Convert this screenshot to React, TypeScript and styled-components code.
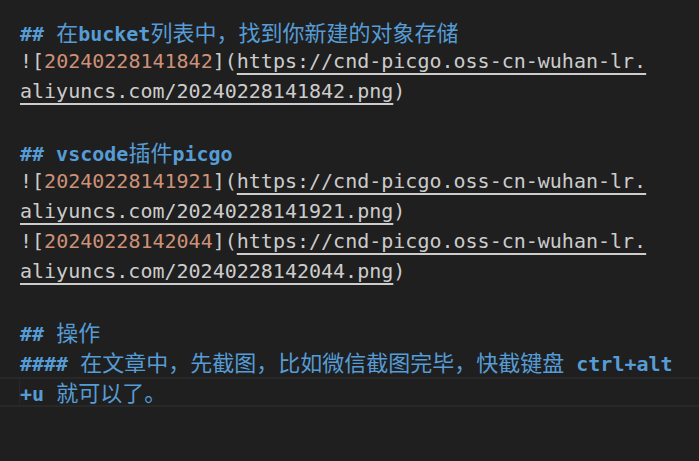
import React from "react";
import styled, { createGlobalStyle, css } from "styled-components";

const Global = createGlobalStyle`
  html, body {
    margin: 0;
    padding: 0;
    background: #1f1f1f;
  }
  #root {
    min-height: 100vh;
    background: #1f1f1f;
  }
`;

const Editor = styled.div`
  display: flex;
  flex-direction: column;
  padding-top: 17px;
  width: 699px;
  height: 461px;
  box-sizing: border-box;
  overflow: hidden;
  background: #1f1f1f;
  font-family: "DejaVu Sans Mono", "Liberation Mono", monospace;
  font-size: 20px;
  color: #cccccc;
`;

const Line = styled.div`
  display: flex;
  height: 30px;
`;

const Gutter = styled.div<{ $current?: boolean }>`
  width: 19px;
  flex: none;
  box-sizing: border-box;
  border-top: 2px solid transparent;
  border-bottom: 2px solid transparent;
  ${(p) =>
    p.$current &&
    css`
      border-color: #282828;
    `}
`;

const Code = styled.div<{ $current?: boolean }>`
  flex: 1;
  box-sizing: border-box;
  white-space: pre;
  line-height: 24px;
  padding-bottom: 2px;
  border: 2px solid transparent;
  border-right: none;
  border-left-width: 1px;
  ${(p) =>
    p.$current &&
    css`
      border-color: #282828;
    `}
`;

const Heading = styled.span`
  color: #569cd6;
  font-weight: 700;
`;

const Han = styled.span`
  font-family: "Noto Sans CJK SC", sans-serif;
  font-size: 22px;
  font-weight: 400;
`;

const AltText = styled.span`
  color: #ce9178;
`;

const Link = styled.span`
  text-decoration: underline;
  text-decoration-thickness: 2px;
  text-underline-offset: 5px;
  text-decoration-color: #cccccc;
`;

type Seg =
  | { k: "h"; t: string }
  | { k: "hh"; t: string }
  | { k: "p"; t: string }
  | { k: "alt"; t: string }
  | { k: "link"; t: string };

const img = (id: string): Seg[][] => [
  [
    { k: "p", t: "![" },
    { k: "alt", t: id },
    { k: "p", t: "](" },
    { k: "link", t: "https://cnd-picgo.oss-cn-wuhan-lr." },
  ],
  [
    { k: "link", t: `aliyuncs.com/${id}.png` },
    { k: "p", t: ")" },
  ],
];

const lines: Seg[][] = [
  [
    { k: "h", t: "## " },
    { k: "hh", t: "在" },
    { k: "h", t: "bucket" },
    { k: "hh", t: "列表中，找到你新建的对象存储" },
  ],
  ...img("20240228141842"),
  [],
  [
    { k: "h", t: "## vscode" },
    { k: "hh", t: "插件" },
    { k: "h", t: "picgo" },
  ],
  ...img("20240228141921"),
  ...img("20240228142044"),
  [],
  [
    { k: "h", t: "## " },
    { k: "hh", t: "操作" },
  ],
  [
    { k: "h", t: "#### " },
    { k: "hh", t: "在文章中，先截图，比如微信截图完毕，快截键盘" },
    { k: "h", t: " ctrl+alt" },
  ],
  [
    { k: "h", t: "+u " },
    { k: "hh", t: "就可以了。" },
  ],
];

const renderSeg = (s: Seg, i: number) => {
  switch (s.k) {
    case "h":
      return <Heading key={i}>{s.t}</Heading>;
    case "hh":
      return (
        <Heading key={i}>
          <Han>{s.t}</Han>
        </Heading>
      );
    case "alt":
      return <AltText key={i}>{s.t}</AltText>;
    case "link":
      return <Link key={i}>{s.t}</Link>;
    default:
      return <span key={i}>{s.t}</span>;
  }
};

export default function App() {
  const currentIndex = lines.length - 1;
  return (
    <>
      <Global />
      <Editor>
        {lines.map((segs, i) => {
          const cur = i === currentIndex;
          return (
            <Line key={i}>
              <Gutter $current={cur} />
              <Code $current={cur}>{segs.length ? segs.map(renderSeg) : " "}</Code>
            </Line>
          );
        })}
      </Editor>
    </>
  );
}
